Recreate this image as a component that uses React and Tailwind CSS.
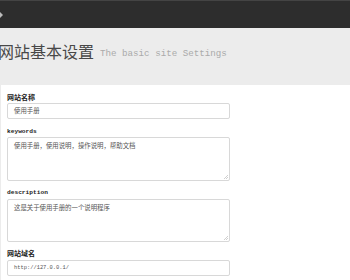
// Site settings page — dark top bar, grey title band, white form card
import React from 'react';

const CJK = { fontFamily: '"SimSun", "Noto Sans CJK SC", sans-serif' };
const MONO = { fontFamily: '"Liberation Mono", monospace' };

function Label({ children, mono }) {
  return (
    <div
      className={mono ? 'text-[6.2px] font-bold text-[#222] leading-none' : 'text-[7px] font-bold text-[#222] leading-none'}
      style={mono ? MONO : CJK}
    >
      {children}
    </div>
  );
}

function Field({ children, area, mono, h }) {
  return (
    <div
      className={
        'relative w-[223px] rounded-[2px] border border-[#d8d8d8] bg-white pl-[6px] text-[#555] ' +
        (area ? 'pt-[5px]' : 'h-[16px] flex items-center')
      }
      style={area ? { height: h } : undefined}
    >
      <span className={mono ? 'block text-[5.4px] leading-none' : 'block text-[6.4px] leading-none'} style={mono ? MONO : CJK}>
        {children}
      </span>
      {area && (
        <svg className="absolute right-[1px] bottom-[1px]" width="4" height="4" viewBox="0 0 4 4">
          <path d="M4 0 L0 4 M4 2 L2 4" stroke="#bbb" strokeWidth="0.7" />
        </svg>
      )}
    </div>
  );
}

export default function App() {
  return (
    <div className="w-[350px] h-[280px] overflow-hidden bg-[#ececec] text-[7px] leading-none">
      {/* Top bar */}
      <div className="h-[28px] bg-[#2d2d2d] border-t border-[#444] flex items-center">
        <div className="w-0 h-0 border-y-[3px] border-y-transparent border-l-[3px] border-l-[#bbb]" />
      </div>

      {/* Title band */}
      <div className="h-[57px] flex items-end pb-[26px] gap-[6px] -ml-[2px]">
        <span className="text-[16px] leading-none text-[#484848]" style={CJK}>网站基本设置</span>
        <span className="text-[9.2px] leading-none text-[#aaa] mb-[1px]" style={MONO}>The basic site Settings</span>
      </div>

      {/* Form card */}
      <div className="ml-[1px] bg-white h-full pl-[6px] pt-[9px] flex flex-col">
        <Label>网站名称</Label>
        <div className="mt-[2px]"><Field>使用手册</Field></div>

        <div className="mt-[10px]"><Label mono>keywords</Label></div>
        <div className="mt-[2px]"><Field area h={44}>使用手册，使用说明，操作说明，帮助文档</Field></div>

        <div className="mt-[9px]"><Label mono>description</Label></div>
        <div className="mt-[3px]"><Field area h={43}>这是关于使用手册的一个说明程序</Field></div>

        <div className="mt-[8px]"><Label>网站域名</Label></div>
        <div className="mt-[3px]"><Field mono>http://127.0.0.1/</Field></div>
      </div>
    </div>
  );
}
